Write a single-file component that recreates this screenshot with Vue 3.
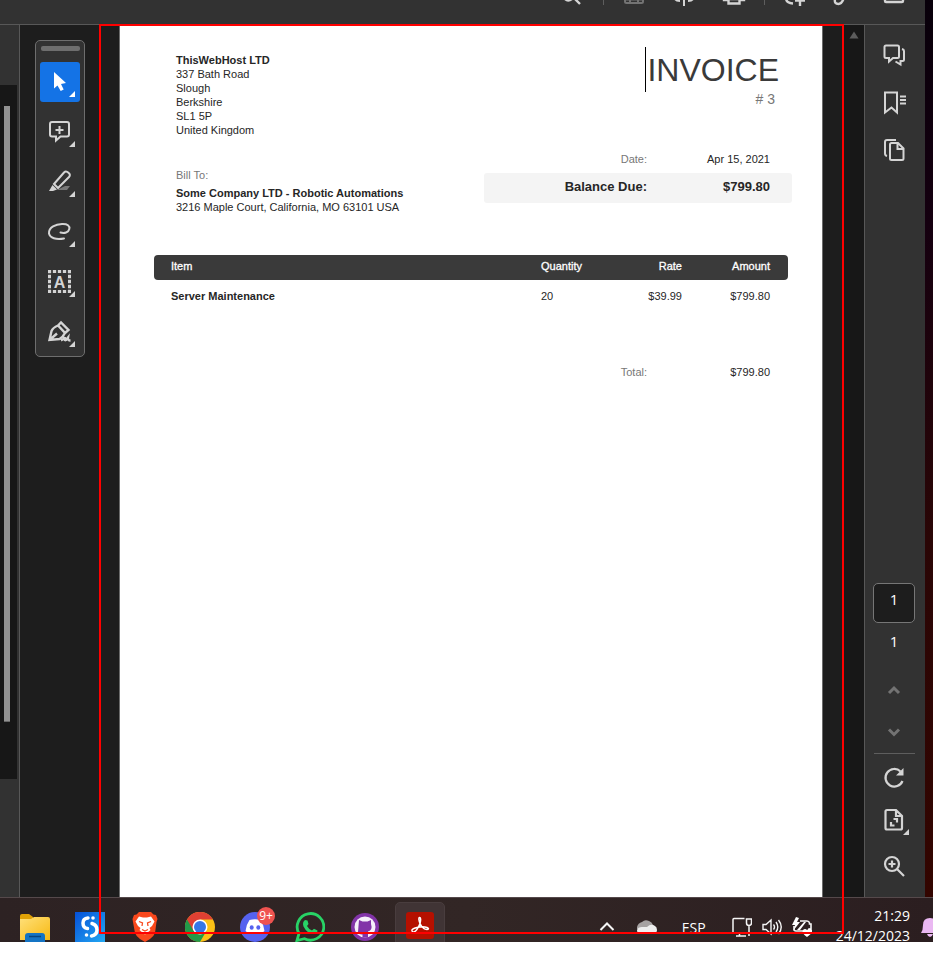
<script setup>
import { ref } from 'vue'

const sender = ['337 Bath Road', 'Slough', 'Berkshire', 'SL1 5P', 'United Kingdom']
const items = [
  { name: 'Server Maintenance', quantity: '20', rate: '$39.99', amount: '$799.80' }
]
const currentPage = ref('1')
</script>

<template>
  <div class="screen">
    <div class="desktop">
      <div class="reader">
        <header class="topbar">
          <button class="top-btn" aria-label="Find">
            <svg width="24" height="8" viewBox="0 0 24 8"><path d="M4 -1 Q7 2 11 -1 M13 -2 L19 4" class="line bold" /></svg>
          </button>
          <span class="sep"></span>
          <div class="top-group">
            <button class="top-btn dim" aria-label="Save">
              <svg width="24" height="8" viewBox="0 0 24 8"><path d="M3 -4V1.500a1.500 1.500 0 0 0 1.500 1.500H19.500A1.500 1.500 0 0 0 21 1.500V-4M3 -.500H21M8 -.500V3M16 -.500V3" class="line" /></svg>
            </button>
            <button class="top-btn" aria-label="Upload">
              <svg width="24" height="8" viewBox="0 0 24 8"><path d="M12 -6V6M3 -1Q4 1 8 1M21 -1Q20 1 16 1" class="line" /></svg>
            </button>
            <button class="top-btn" aria-label="Print">
              <svg width="24" height="8" viewBox="0 0 24 8"><path d="M2 -3V0H6.500M22 -3V0H17.500M6.500 -1V3.500H17.500V-1Z" class="line bold" /></svg>
            </button>
          </div>
          <span class="sep"></span>
          <div class="top-group last">
            <button class="top-btn" aria-label="Add to cloud">
              <svg width="24" height="8" viewBox="0 0 24 8"><path d="M3 -2Q3 3 10 3.500M17 -3V6M12 .500H22" class="line bold" /></svg>
            </button>
            <button class="top-btn" aria-label="Copy link">
              <svg width="24" height="8" viewBox="0 0 24 8"><path d="M8 -1Q7 4 11.500 4Q14.500 4 16.500 -1" class="line bold" /></svg>
            </button>
            <button class="top-btn mail" aria-label="Send by email">
              <svg width="24" height="8" viewBox="0 0 24 8"><path d="M3 -4V1a1 1 0 0 0 1 1H20a1 1 0 0 0 1-1V-4" class="line bold" /></svg>
            </button>
          </div>
        </header>

        <div class="workspace">
          <aside class="left-rail"><div class="left-track"><div class="left-thumb"></div></div></aside>

          <main class="canvas">
            <nav class="tools" aria-label="Tools">
              <span class="grip"></span>
              <button class="tool active" aria-label="Select">
                <svg width="40" height="40" viewBox="0 0 40 40"><path d="M14 10V26.500L17.500 23.500L20.700 29L23.700 27.500L21 22L26 21Z" fill="#fff" /><path d="M35 29V35H29Z" fill="#fff" /></svg>
              </button>
              <button class="tool" aria-label="Add comment">
                <svg width="40" height="40" viewBox="0 0 40 40"><path d="M12 10H27a2 2 0 0 1 2 2V22.500a2 2 0 0 1-2 2H20.500L16 28.500V24.500H12a2 2 0 0 1-2-2V12a2 2 0 0 1 2-2ZM19.500 14V22M15.500 18H23.500" class="line" /><path d="M35 29V35H29Z" class="solid" /></svg>
              </button>
              <button class="tool" aria-label="Highlight">
                <svg width="40" height="40" viewBox="0 0 40 40"><path d="M25 24H30L27 28H17Z" fill="#777" /><path d="M14 22L24 10.500Q26 8.500 28.500 10.800Q31 13 29 15L18 26ZM14 22L18 26" class="line" /><path d="M12.500 23L17 27.500L13 29H9Z" class="solid" /><path d="M35 29V35H29Z" class="solid" /></svg>
              </button>
              <button class="tool" aria-label="Draw">
                <svg width="40" height="40" viewBox="0 0 40 40"><path d="M24 26.500C16 28 10 26 9 21.500C8.500 15 16 12.200 22 12C27.500 11.700 30 14 29.300 17C28.500 20.500 24.500 21.500 20.500 20.500" class="line round" /><path d="M35 29V35H29Z" class="solid" /></svg>
              </button>
              <button class="tool" aria-label="Text">
                <svg width="40" height="40" viewBox="0 0 40 40"><rect x="9.500" y="9.500" width="20" height="20" class="line dashed" /><text x="19.500" y="25.500" text-anchor="middle" class="glyph">A</text><path d="M35 29V35H29Z" class="solid" /></svg>
              </button>
              <button class="tool" aria-label="Sign">
                <svg width="40" height="40" viewBox="0 0 40 40"><path d="M9.500 28L11.500 19Q13 15.500 18 13.500L25 21Q23 25 19.500 27ZM9.500 28L17 21.500M18 13.500L21 10.500L28.500 18L25 21M21 28.500Q23.500 27.500 25 25Q24 29 26 28L28 25.500Q27.500 28.500 30.500 28.500" class="line bold" /><path d="M35 29V35H29Z" class="solid" /></svg>
              </button>
            </nav>

            <article class="page">
              <div class="page-head">
                <div class="parties">
                  <address>
                    <strong>ThisWebHost LTD</strong>
                    <span v-for="l in sender" :key="l">{{ l }}</span>
                  </address>
                  <p class="muted">Bill To:</p>
                  <address class="bill">
                    <strong>Some Company LTD - Robotic Automations</strong>
                    <span>3216 Maple Court, California, MO 63101 USA</span>
                  </address>
                </div>
                <div class="summary">
                  <h1>INVOICE</h1>
                  <p class="number"># 3</p>
                  <dl class="pair"><dt>Date:</dt><dd>Apr 15, 2021</dd></dl>
                  <dl class="pair balance"><dt>Balance Due:</dt><dd>$799.80</dd></dl>
                </div>
              </div>

              <table class="items">
                <thead>
                  <tr><th class="c-item">Item</th><th class="c-qty">Quantity</th><th class="c-rate">Rate</th><th class="c-amt">Amount</th></tr>
                </thead>
                <tbody>
                  <tr v-for="i in items" :key="i.name">
                    <td class="c-item"><strong>{{ i.name }}</strong></td>
                    <td class="c-qty">{{ i.quantity }}</td>
                    <td class="c-rate">{{ i.rate }}</td>
                    <td class="c-amt">{{ i.amount }}</td>
                  </tr>
                </tbody>
              </table>
              <dl class="pair total"><dt>Total:</dt><dd>$799.80</dd></dl>
            </article>
          </main>

          <div class="scroll"><svg width="12" height="8" viewBox="0 0 12 8"><path d="M6 .500L10.500 7.500H1.500Z" fill="#5c5c5c" /></svg></div>

          <aside class="right-rail">
            <div class="rail-group top">
              <button aria-label="Comments">
                <svg width="24" height="24" viewBox="0 0 24 24"><path d="M4 2.500H15.500a1.500 1.500 0 0 1 1.500 1.500V13.500a1.500 1.500 0 0 1-1.500 1.500H11L7 18.500V15H4a1.500 1.500 0 0 1-1.500-1.500V4A1.500 1.500 0 0 1 4 2.500ZM20 6Q22 6.500 22 8V16.500a1.500 1.500 0 0 1-1.500 1.500H18.500V21.500L13.500 18.500" class="line" /></svg>
              </button>
              <button aria-label="Bookmarks">
                <svg width="24" height="24" viewBox="0 0 24 24"><path d="M3 1.500H15V21.500L9.500 16.500L3 21.500ZM18 5.500H24M18 9H24M18 12.500H24" class="line" /></svg>
              </button>
              <button aria-label="Pages">
                <svg width="24" height="24" viewBox="0 0 24 24"><path d="M5 17Q3 16.500 3 14.500V3Q3 1 5 1H14M9.500 4H16L21.500 9.500V19.500a1.500 1.500 0 0 1-1.500 1.500H9.500A1.500 1.500 0 0 1 8 19.500V5.500A1.500 1.500 0 0 1 9.500 4ZM15.500 4V10H21.500" class="line" /></svg>
              </button>
            </div>
            <div class="rail-group">
              <input v-model="currentPage" class="page-input" aria-label="Page number" />
              <span class="page-count">1</span>
              <button class="up" aria-label="Previous page">
                <svg width="24" height="24" viewBox="0 0 24 24"><path d="M7 15L12 10L17 15" class="line chev" /></svg>
              </button>
              <button class="down" aria-label="Next page">
                <svg width="24" height="24" viewBox="0 0 24 24"><path d="M7 9.500L12 14.500L17 9.500" class="line chev" /></svg>
              </button>
              <span class="rule"></span>
              <button aria-label="Rotate">
                <svg width="24" height="24" viewBox="0 0 24 24"><path d="M20.500 15A8.800 8.800 0 1 1 18.500 5.500" class="line heavy" /><path d="M21.500 2V9.500H14Z" class="solid" /></svg>
              </button>
              <button class="fit" aria-label="Fit page">
                <svg width="28" height="28" viewBox="0 0 28 28"><path d="M5 2H14L20 8V20a1.500 1.500 0 0 1-1.500 1.500H5A1.500 1.500 0 0 1 3.500 20V3.500A1.500 1.500 0 0 1 5 2ZM14 2V8H20M11.500 11H15V14.500M12.500 17.500H9V14" class="line heavy" /><path d="M27 21V27H21Z" class="solid" /></svg>
              </button>
              <button aria-label="Zoom in">
                <svg width="24" height="24" viewBox="0 0 24 24"><path d="M17 10A7 7 0 1 1 3 10A7 7 0 1 1 17 10ZM15.500 15.500L22 22M10 6.500V13.500M6.500 10H13.500" class="line heavy" /></svg>
              </button>
            </div>
          </aside>
        </div>
      </div>
      <div class="wallpaper"></div>
    </div>

    <footer class="taskbar">
      <div class="apps">
        <button aria-label="File Explorer">
          <svg width="30" height="30" viewBox="0 0 30 30"><defs><linearGradient id="fold" x2="1" y2="1"><stop stop-color="#ffe07a" /><stop offset="1" stop-color="#f7b912" /></linearGradient></defs><path d="M0 4a2 2 0 0 1 2-2H9L13 5V12H0Z" fill="#e0a106" /><path d="M0 7H11L14 5H28a2 2 0 0 1 2 2V28H0Z" fill="url(#fold)" /><path d="M5 30V24Q5 21 8 21H22Q25 21 25 24V30Z" fill="#1474c4" /><path d="M9 24.500H21" stroke="#07457f" stroke-width="1.500" /></svg>
        </button>
        <button aria-label="Notes">
          <svg width="30" height="30" viewBox="0 0 30 30"><defs><linearGradient id="sblue" x2="1" y2="1"><stop stop-color="#0550d8" /><stop offset="1" stop-color="#23a8f2" /></linearGradient></defs><rect width="30" height="30" fill="url(#sblue)" /><path d="M13 6Q8 6.500 8 11Q8 16 12.500 16.500M17 11.500Q22 13 22 18Q22 23 16.500 24" fill="none" stroke="#fff" stroke-width="3.500" stroke-linecap="round" /><circle cx="18" cy="6" r="1.800" fill="#fff" /><circle cx="11.500" cy="23" r="1.800" fill="#fff" /></svg>
        </button>
        <button aria-label="Brave">
          <svg width="30" height="30" viewBox="0 0 30 30"><path d="M9 0H21L23.500 2.500L26 3L27.500 7L26.500 10L25 21Q24 24 20 27L15 30L10 27Q6 24 5 21L3 10L2.500 7L4 3L6.500 2.500Z" fill="#f9481c" /><path d="M9 4.500L13 5.500H17L21 4.500L24.500 9.500L22 14L19.500 16L20.500 18L17 21L15 22.500L13 21L9.500 18L10.500 16L8 14L5.500 9.500Z" fill="#fff" /><path d="M9 9.500L12.500 11L12 14M21 9.500L17.500 11L18 14M12 17.500L15 19L18 17.500" fill="none" stroke="#f9481c" stroke-width="1.300" /></svg>
        </button>
        <button aria-label="Chrome">
          <svg width="30" height="30" viewBox="0 0 30 30"><circle cx="15" cy="15" r="15" fill="#fbc116" /><path d="M15 15L2 7.500A15 15 0 0 0 15 30L21.500 18.700Z" fill="#229a48" /><path d="M2 7.500A15 15 0 0 1 28 7.500H15L8.500 18.700Z" fill="#df4033" /><circle cx="15" cy="15" r="7.500" fill="#fff" /><circle cx="15" cy="15" r="6" fill="#3477e8" /></svg>
        </button>
        <button class="discord" aria-label="Discord">
          <svg width="30" height="30" viewBox="0 0 30 30"><circle cx="15" cy="15" r="15" fill="#5662ef" /><path d="M9.500 8Q15 6.500 20.500 8Q24 13 24.500 19Q22 21.500 19 22L18 20H12L11 22Q8 21.500 5.500 19Q6 13 9.500 8Z" fill="#fff" /><ellipse cx="11.700" cy="15.500" rx="2" ry="2.300" fill="#5662ef" /><ellipse cx="18.300" cy="15.500" rx="2" ry="2.300" fill="#5662ef" /></svg>
          <span class="badge">9+</span>
        </button>
        <button aria-label="WhatsApp">
          <svg width="30" height="30" viewBox="0 0 30 30"><path d="M2 28.500L4 21.500A13.300 13.300 0 1 1 9.500 26.700Z" fill="none" stroke="#28d366" stroke-width="2.800" /><path d="M10 8L12.500 8.500L13.500 12L12 14Q13.500 17 17 18.500L19 16.700L22.500 18.500Q22.500 22 18.500 22Q12 21.500 8.500 14.500Q7 10 10 8Z" fill="#28d366" /></svg>
        </button>
        <button aria-label="GitHub Desktop">
          <svg width="30" height="30" viewBox="0 0 30 30"><circle cx="15" cy="15" r="14" fill="#8234a8" /><circle cx="15" cy="15" r="10.500" fill="#f5effa" /><path d="M9 8L12.500 9.500H17.500L21 8V12Q23 18 18 19.500V25.500H12.500V22.500Q9 23 8 20M12.500 22Q10 22.500 8.500 20M12 19.500Q7 18 9 12Z" fill="#8234a8" /></svg>
        </button>
        <button class="current" aria-label="Acrobat">
          <svg width="30" height="30" viewBox="0 0 30 30"><rect x="1" y="1" width="28" height="27" rx="3" fill="#b51000" /><path d="M7 20Q6 18 12 16.500Q18 15 22 16.500Q25 18 22 18.500Q18 18.500 15 12.500Q13 7 14.500 6.500Q16.500 6.500 15 12.500Q12 20 9 21Q7.500 21.200 7 20Z" fill="none" stroke="#fff" stroke-width="1.500" /></svg>
        </button>
      </div>
      <div class="tray">
        <button aria-label="Show hidden icons"><svg width="20" height="20" viewBox="0 0 20 20"><path d="M3.500 13L10 6.500L16.500 13" class="w" stroke-width="2" /></svg></button>
        <button class="cloud" aria-label="OneDrive"><svg width="20" height="20" viewBox="0 0 20 20"><path d="M0 10Q1 6 5 5Q8 2 12 4Q15 5 16 8L9 13L0 12Z" fill="#a6a2a2" /><path d="M2 16Q0 16 0 13Q1 10 5 10L10 10Q14 6 18 9Q20 10 20 13Q20 16 17 16Z" fill="#eee" /></svg></button>
        <span class="lang">ESP</span>
        <div class="status">
          <svg width="20" height="20" viewBox="0 0 20 20"><path d="M12.500 1.500H2Q1 1.500 1 2.500V16H14M4 19H14M7.500 16V19M17 9V19M14.500 2H19.500V6Q19.500 8.500 17 8.500Q14.500 8.500 14.500 6Z" class="w" stroke-width="1.500" /></svg>
          <svg width="20" height="20" viewBox="0 0 20 20"><path d="M1 7.500H4L9 3V17L4 12.500H1ZM11.500 7.500Q13.500 10 11.500 12.500M14 5Q17.500 10 14 15M16.500 3Q22 10 16.500 17" class="w" stroke-width="1.400" /></svg>
          <svg width="20" height="20" viewBox="0 0 20 20"><path d="M8 4H15Q17 4 17.500 6V7H19V12H17Q17 14 15 14H4Q2 14 2 12V9" class="w" stroke-width="1.600" /><path d="M4 0L0 8H3L1 14L8 5H5L7 1Z" fill="#fff" /><path d="M5 13L12 5H14L8 13Z" fill="#fff" /><path d="M15 13Q18 10 20 13Q21 16 15 20Q9 16 11 13Q13 11 15 13Z" fill="#fff" /></svg>
        </div>
        <time class="clock"><span>21:29</span><span>24/12/2023</span></time>
        <button class="bell" aria-label="Notifications"><svg width="18" height="20" viewBox="0 0 18 20"><path d="M0 16Q2 13 2 8Q2 1 9 1Q16 1 16 8Q16 13 18 16Z" fill="#eab8f2" /><path d="M6 17H12Q11 20 9 20Q7 20 6 17Z" fill="#eab8f2" /></svg></button>
      </div>
    </footer>
    <div class="selection"></div>
  </div>
</template>

<style>
body { background: #fff; }
</style>

<style scoped>
* { box-sizing: border-box; }
button { border: 0; padding: 0; background: none; display: flex; align-items: center; justify-content: center; position: relative; }
svg { display: block; flex: none; }
h1, p, dl, dd { margin: 0; }
address { font-style: normal; display: flex; flex-direction: column; }

.line { fill: none; stroke: #d4d4d4; stroke-width: 2; }
.line.bold { stroke-width: 2.4; }
.line.heavy { stroke-width: 2.2; }
.line.round { stroke-linecap: round; }
.line.dashed { stroke-width: 3; stroke-dasharray: 3.3 1.7; stroke-dashoffset: 1.65; }
.line.chev { stroke: #737373; stroke-width: 3; }
.solid { fill: #d4d4d4; }
.glyph { font: bold 16px "Liberation Sans", Arial, sans-serif; fill: #d4d4d4; }
.w { fill: none; stroke: #f5f5f5; }

.screen { position: relative; display: flex; flex-direction: column; min-height: calc(100vh - 16px); margin-right: 10px; overflow: hidden; font-family: "Liberation Sans", Arial, sans-serif; }
.desktop { flex: 1; display: flex; }
.reader { flex: 1; display: flex; flex-direction: column; background: #323232; }
.wallpaper { width: 8px; background: linear-gradient(#08000a, #150010 25%, #2a0606 60%, #330500); }

.topbar { display: flex; justify-content: flex-end; align-items: flex-start; gap: 18px; height: 25px; padding-right: 19px; border-bottom: 1px solid #585858; }
.top-group { display: flex; gap: 26px; }
.top-group.last { gap: 20px; }
.mail { margin-left: 11px; }
.dim { opacity: 0.4; }
.sep { width: 1px; height: 5px; background: #5e5e5e; }

.workspace { flex: 1; display: flex; }
.left-rail { width: 20px; display: flex; padding: 60px 2px 118px 0; border-right: 1px solid #585858; }
.left-track { flex: 1; display: flex; padding: 21px 7px 57px 4px; background: #171717; }
.left-thumb { flex: 1; background: #929292; border-bottom: 1px solid #666; }
.canvas { flex: 1; display: flex; align-items: stretch; padding: 0 21px 0 15px; background: #1d1d1d; }

.tools { align-self: flex-start; width: 50px; margin: 15px 34px 0 0; padding: 5px 4px 4px; display: flex; flex-direction: column; gap: 10px; border: 1px solid #6e6e6e; border-radius: 5px; background: #323232; }
.grip { height: 5px; margin: 0 0 1px 1px; border-radius: 2px; background: #6e6e6e; }
.tool { width: 40px; height: 40px; border-radius: 3px; }
.tool.active { background: #1473e6; }

.page { flex: 1; padding: 28px 30px 0 34px; border: 1px solid #6b6b6b; border-width: 0 1px; background: #fff; color: #262626; font-size: 11px; line-height: 14px; }
.page-head { display: flex; justify-content: space-between; }
.parties { padding-left: 22px; }
.muted { margin: 31px 0 4px; color: #777; }
.summary { width: 308px; }
h1 { width: 134px; height: 45px; margin: -6px 13px 0 auto; border-left: 1px solid #000; font-size: 32px; font-weight: 400; line-height: 46px; color: #3a3a3a; text-align: right; }
.number { margin: 0 17px 46px; font-size: 14px; line-height: 14px; text-align: right; color: #777; }
.pair { display: flex; padding-right: 22px; line-height: 14px; }
.pair dt { width: 163px; text-align: right; color: #777; }
.pair dd { flex: 1; text-align: right; }
.pair.balance { height: 30px; margin-top: 7px; border-radius: 3px; background: #f4f4f4; font-size: 13px; font-weight: 700; line-height: 28px; }
.pair.balance dt { color: #262626; }
.pair.total { width: 308px; margin: 53px 0 0 auto; }

.items { width: calc(100% - 4px); margin-top: 41px; border-collapse: separate; border-spacing: 0; table-layout: fixed; }
th { height: 25px; padding: 0 0 4px; background: #3a3a3a; color: #fff; font-weight: 400; text-align: left; -webkit-text-stroke: 0.3px #fff; }
td { height: 32px; padding: 0; }
th:first-child { border-radius: 4px 0 0 4px; }
th:last-child { border-radius: 0 4px 4px 0; }
.c-item { padding-left: 17px; }
.c-qty { width: 70px; }
.c-rate { width: 71px; text-align: right; }
.c-amt { width: 106px; padding-right: 18px; text-align: right; }

.scroll { width: 20px; display: flex; justify-content: center; padding-top: 6px; background: #171717; }
.right-rail { width: 61px; display: flex; flex-direction: column; justify-content: space-between; padding: 18px 2px 19px 0; border-left: 1px solid #585858; }
.rail-group { display: flex; flex-direction: column; align-items: center; gap: 20px; }
.rail-group.top { gap: 24px; }
.rail-group button { width: 24px; height: 24px; }
.rail-group .fit { justify-content: flex-start; }
.page-input { width: 42px; height: 40px; padding: 0 0 8px; border: 1px solid #767676; border-radius: 5px; background: #1d1d1d; color: #fff; text-align: center; font: 15px "Open Sans", sans-serif; }
.page-count { margin: -12px 0 7px; color: #fff; font: 15px/20px "Open Sans", sans-serif; }
.down { margin-top: -2px; }
.rule { width: 41px; height: 1px; margin: -11px 0 -8px; background: #5e5e5e; }

.taskbar { display: flex; justify-content: space-between; height: 45px; overflow: hidden; border-top: 1px solid #55494b; background: linear-gradient(90deg, #2d2223, #322625 50%, #2b1e20); color: #fff; font-family: "Open Sans", sans-serif; }
.apps { display: flex; gap: 25px; padding-left: 20px; }
.apps button { width: 30px; height: 44px; padding-top: 14px; }
.apps .current { width: 50px; height: 50px; margin: 4px 0 0 -10px; padding: 0 0 3px; border: 1px solid #493d3e; border-radius: 5px; background: #403435; }
.badge { position: absolute; top: 9px; right: -5px; width: 18px; height: 18px; border-radius: 9px; background: #ef5350; color: #fff; font: 12px/17px "Open Sans", sans-serif; text-align: center; }
.tray { display: flex; align-items: center; padding-top: 14px; font-size: 14px; }
.cloud { margin-left: 20px; }
.lang { margin-left: 25px; }
.status { display: flex; gap: 10px; margin-left: 26px; }
.clock { align-self: flex-start; display: flex; flex-direction: column; margin: -6px 0 0 24px; line-height: 20px; text-align: right; }
.bell { width: 12px; margin-left: 11px; justify-content: flex-start; }

.selection { position: absolute; inset: 24px 89px 8px 99px; border: 2px solid #f00; pointer-events: none; }
</style>
